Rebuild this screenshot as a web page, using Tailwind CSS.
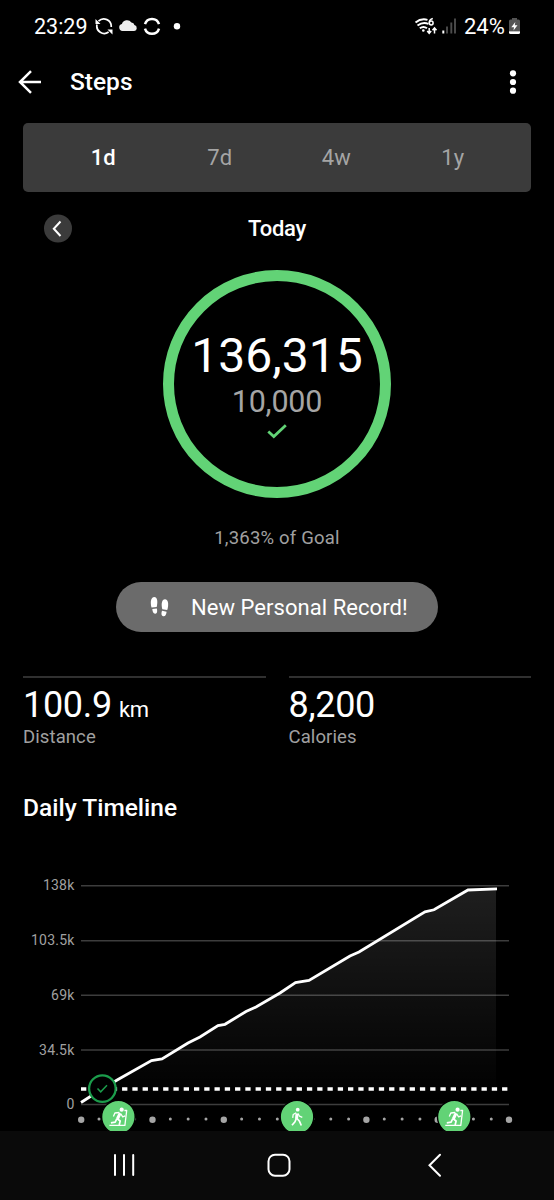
<!DOCTYPE html>
<html lang="en">
<head>
    <meta charset="UTF-8">
    <meta name="viewport" content="width=device-width, initial-scale=1.0">
    <title>Steps</title>
    <script src="https://cdn.jsdelivr.net/npm/@tailwindcss/browser@4"></script>
</head>
<body class="bg-black text-white font-['Roboto',sans-serif]">
    <div class="w-[554px] h-[1200px] flex flex-col overflow-hidden">
        <!-- Status bar -->
        <div class="h-[52px] shrink-0 flex items-center justify-between pl-[34px] pr-[33px]">
            <div class="flex items-center">
                <span class="w-[60px] pt-px text-[21.5px] leading-none">23:29</span>
                <svg class="w-[90px] h-5" viewBox="94 16 90 20" fill="none" stroke="#fff" stroke-width="1.7">
                    <path d="M98.5 21.2A7.4 7.4 0 0 1 111.2 27M97 24.5A7.4 7.4 0 0 0 108.6 32"/>
                    <path d="M95.5 19v5h5zM107.5 29.5h5v5z" fill="#fff" stroke="none"/>
                    <path d="M122.5 31a3.5 3.5 0 0 1-.6-6.9 5.3 5.3 0 0 1 9.5-1.5 3 3 0 0 1 3 2.500 3 3 0 0 1-.2 5.900z" fill="#eee" stroke="none"/>
                    <path d="M145 24.2A7.3 7.3 0 0 1 159 24.2M145 28.6A7.3 7.3 0 0 0 159 28.6" stroke-width="2.5"/>
                    <circle cx="177" cy="26.2" r="3.2" fill="#fff" stroke="none"/>
                </svg>
            </div>
            <div class="flex items-center">
                <svg class="w-[46px] h-5" viewBox="413 16 46 20" fill="none" stroke="#fff" stroke-width="1.5">
                    <path d="M415.5 22.5Q421 18 427.5 19.8M417.5 25.5Q423 21.5 428.5 24M419.8 28.3Q423.5 25.5 427 28.3" stroke-width="1.9"/>
                    <circle cx="423.3" cy="30.5" r="1.3" fill="#fff" stroke="none"/>
                    <path d="M432.8 18.6Q429.3 19.5 429.3 22.7"/>
                    <circle cx="431.2" cy="23" r="1.9"/>
                    <path d="M429.2 28v5M427.2 31l2 2.3 2-2.3M434.500 33.5v-5M432.5 30.300l2-2.300 2 2.300"/>
                    <path d="M443.300 30.500v3" stroke-width="2"/>
                    <path d="M447 26.500v7M451.300 22.500v11M455 18.500v15" stroke="#4c4c4c" stroke-width="1.9"/>
                </svg>
                <span class="w-[49px] pt-px pl-[5px] text-[22px] leading-none">24%</span>
                <svg class="w-[13px] h-5" viewBox="508 16 13 20">
                    <path d="M512 18h5v1.500h1.500a1.500 1.500 0 0 1 1.500 1.500V31H509V21a1.500 1.500 0 0 1 1.500-1.500H512z" fill="#555"/>
                    <path d="M509 31.200h11v1.300a1.500 1.500 0 0 1-1.500 1.500h-8a1.500 1.500 0 0 1-1.500-1.500z" fill="#fff"/>
                    <path d="M515.300 22l-4 5.200h2.700l-.5 3.300 4-5.200h-2.700z" fill="#fff"/>
                </svg>
            </div>
        </div>

        <!-- App bar -->
        <div class="h-[60px] shrink-0 flex items-center pl-[17px] pr-[37px]">
            <svg class="w-[26px] h-6" viewBox="0 0 26 24" fill="none" stroke="#fff" stroke-width="2.5">
                <path d="M24 12H3M14 1.2L3 12l11 10.800"/>
            </svg>
            <h1 class="ml-[27px] text-[24.5px] font-medium leading-none">Steps</h1>
            <svg class="ml-auto w-2 h-6" viewBox="0 0 8 24" fill="#fff">
                <circle cx="4" cy="3.3" r="3.1"/>
                <circle cx="4" cy="12" r="3.1"/>
                <circle cx="4" cy="20.7" r="3.1"/>
            </svg>
        </div>

        <!-- Range tabs -->
        <div class="mt-[11px] mx-[23px] h-[69px] shrink-0 rounded-[5px] bg-[#3b3b3b] grid grid-cols-4 items-center pl-[22px] pr-5 text-center text-[22px] leading-none text-[#a5a5a5]">
            <span class="font-medium text-white">1d</span>
            <span>7d</span>
            <span>4w</span>
            <span>1y</span>
        </div>

        <!-- Day selector -->
        <div class="mt-[21px] h-[30px] shrink-0 grid grid-cols-[1fr_auto_1fr] items-center px-[43px]">
            <svg class="size-[30px]" viewBox="0 0 30 30" fill="none">
                <circle cx="15" cy="15.500" r="14" fill="#3b3b3b"/>
                <path d="M17.500 8.500L10.800 15.700l6.700 7.300" stroke="#fff" stroke-width="2"/>
            </svg>
            <span class="pt-[2px] text-[22px] font-medium leading-none tracking-[-0.3px]">Today</span>
        </div>

        <!-- Goal ring -->
        <div class="mt-[27px] mx-auto size-[228px] shrink-0 rounded-full border-[11.5px] border-[#62d376] flex flex-col items-center pt-[47px]">
            <span class="text-[48px] leading-[56px]">136,315</span>
            <span class="text-[30.5px] leading-9 tracking-[-0.2px] text-[#a5a5a5]">10,000</span>
            <svg class="mt-[3px] w-5 h-4 shrink-0" viewBox="0 0 20 16" fill="none" stroke="#62d376" stroke-width="2.8">
                <path d="M1.300 8.500l5.500 5L18.800 2.300"/>
            </svg>
        </div>
        <p class="mt-7 text-center text-[18.5px] leading-6 tracking-[0.2px] text-[#a0a0a0]">1,363% of Goal</p>

        <!-- Record badge -->
        <div class="mt-8 mx-auto w-[322px] h-[50px] shrink-0 rounded-full bg-[#6b6b6b] flex items-center pl-[34px]">
            <svg class="w-5 h-[22px]" viewBox="0 0 20 22" fill="#fff">
                <path d="M1.500 11.500C.5 8.500 0 1.500 4 1c4.200 0 3.500 6.500 2.700 10z"/>
                <path d="M2.300 13l4.500-.5c.7 2.500.5 5-1.500 5.200-2 .2-2.800-2.200-3-4.700z"/>
                <path d="M12.300 13.300c-1-3.500-1.300-10 2.900-10 4 .5 3.200 7.500 2 10.800z"/>
                <path d="M12 14.800l4.600.9c-.3 2.500-1.200 4.800-3.300 4.500-2.200-.4-2.100-2.900-1.300-5.400z"/>
            </svg>
            <span class="ml-[21px] pt-[2px] text-[22px] leading-none tracking-[0.05px] whitespace-nowrap">New Personal Record!</span>
        </div>

        <!-- Totals -->
        <div class="mt-11 mx-[23px] grid grid-cols-2 gap-[23px]">
            <div class="border-t-2 border-[#303030] pt-[7px]">
                <p class="h-10 text-[36px] leading-10 tracking-[-0.3px]">100.9<span class="ml-[7px] text-[22px] leading-none">km</span></p>
                <p class="text-[18.5px] leading-6 tracking-[0.1px] text-[#a0a0a0]">Distance</p>
            </div>
            <div class="border-t-2 border-[#303030] pt-[7px]">
                <p class="h-10 text-[36px] leading-10 tracking-[-0.3px]">8,200</p>
                <p class="text-[18.5px] leading-6 tracking-[0.1px] text-[#a0a0a0]">Calories</p>
            </div>
        </div>

        <h2 class="mt-[43px] ml-[23px] text-[24.5px] leading-8 font-medium">Daily Timeline</h2>

        <!-- Timeline chart -->
        <svg class="mt-9 w-[554px] h-[271px] shrink-0" viewBox="0 860 554 271" fill="none">
            <defs>
                <linearGradient id="area" x1="0" y1="888" x2="0" y2="1104" gradientUnits="userSpaceOnUse">
                    <stop offset="0" stop-color="#fff" stop-opacity=".12"/>
                    <stop offset="1" stop-color="#fff" stop-opacity="0"/>
                </linearGradient>
                <g id="treadmill">
                    <circle r="16.800" fill="#62d376" stroke="#000" stroke-width="1.400"/>
                    <g stroke="#fff" stroke-linejoin="round">
                        <path d="M-9 8.300H6.500L8.300-6.500H6" stroke-width="1.300"/>
                        <path d="M1.800-3.800L-1 2" stroke-width="3"/>
                        <path d="M1-4.500L-3.500-4-5-.5M2.500-3L4.300-.2 6.800-1.200" stroke-width="1.300"/>
                        <path d="M-1.500 1.500L1.800 4 .8 8M-1.500 1.500L-3.200 5.200-7.500 5.800" stroke-width="1.700"/>
                    </g>
                    <circle cx="3.300" cy="-7.300" r="2.100" fill="#fff"/>
                </g>
            </defs>

            <g font-size="14" fill="#a0a0a0" text-anchor="end" letter-spacing=".2">
                <text x="74.500" y="890.300">138k</text>
                <text x="74.500" y="945.300">103.5k</text>
                <text x="74.500" y="999.800">69k</text>
                <text x="74.500" y="1054.500">34.5k</text>
                <text x="74.500" y="1109">0</text>
            </g>

            <path d="M81 1102.500L102 1089 118 1079.500 151.500 1060.500 162 1059 188 1043 200 1037 218 1025.500 225 1024.300 246 1011.500 256 1007 280 993 295.500 982.500 309 980.500 350 956 359 952 425 911.800 434 909.800 468 890 496 888.800V1104H81z" fill="url(#area)"/>
            <path d="M81 885.800H509M81 940.700H509M81 995.300H509M81 1050H509M81 1104.400H509" stroke="#fff" stroke-opacity=".24" stroke-width="1.500"/>
            <path d="M81 1102.500L102 1089 118 1079.500 151.500 1060.500 162 1059 188 1043 200 1037 218 1025.500 225 1024.300 246 1011.500 256 1007 280 993 295.500 982.500 309 980.500 350 956 359 952 425 911.800 434 909.800 468 890 497 888.800" stroke="#fff" stroke-width="2.800"/>
            <path d="M81 1089H509" stroke="#fff" stroke-width="3.300" stroke-dasharray="5.300 4.970"/>

            <!-- Hour marks -->
            <path d="M81.200 1119.700h428" stroke="#a5a5a5" stroke-width="6.400" stroke-linecap="round" stroke-dasharray="0 71.300"/>
            <path d="M99 1119H500" stroke="#a5a5a5" stroke-width="3" stroke-linecap="round" stroke-dasharray="0 17.830"/>

            <circle cx="102.400" cy="1088.600" r="13.300" fill="#000" stroke="#1b9c4b" stroke-width="2.300"/>
            <path d="M97.500 1088.500l3.200 3.300 6.300-6.500" stroke="#1b9c4b" stroke-width="1.500"/>

            <use href="#treadmill" x="118.400" y="1117"/>
            <use href="#treadmill" x="454.300" y="1117"/>
            <g transform="translate(297 1117)">
                <circle r="16.800" fill="#62d376" stroke="#000" stroke-width="1.400"/>
                <circle cx=".7" cy="-7.300" r="1.900" fill="#fff"/>
                <g stroke="#fff" stroke-linejoin="round">
                    <path d="M0-3.500L-.5 2" stroke-width="3"/>
                    <path d="M-.8-4.300L-3.800-2.500-4.300 .8M1-3.500L2.500-.8 5.300 .3" stroke-width="1.300"/>
                    <path d="M-.7 1.500L-2 4.800-5 8.300M0 1.500L2.500 4.300 4.300 8.500" stroke-width="1.700"/>
                </g>
            </g>
        </svg>

        <!-- System navigation -->
        <div class="h-[69px] shrink-0 bg-[#0a0a0a]">
            <svg class="w-[554px] h-[69px]" viewBox="0 1131 554 69" fill="none" stroke="#fff" stroke-width="2" stroke-linecap="round">
                <path d="M115 1155v20M124 1155v20M133.200 1155v20"/>
                <rect x="268.500" y="1154.700" width="21" height="21" rx="6.500"/>
                <path d="M440 1154.700L429.500 1165.200l10.500 10.500"/>
            </svg>
        </div>
    </div>
</body>
</html>
